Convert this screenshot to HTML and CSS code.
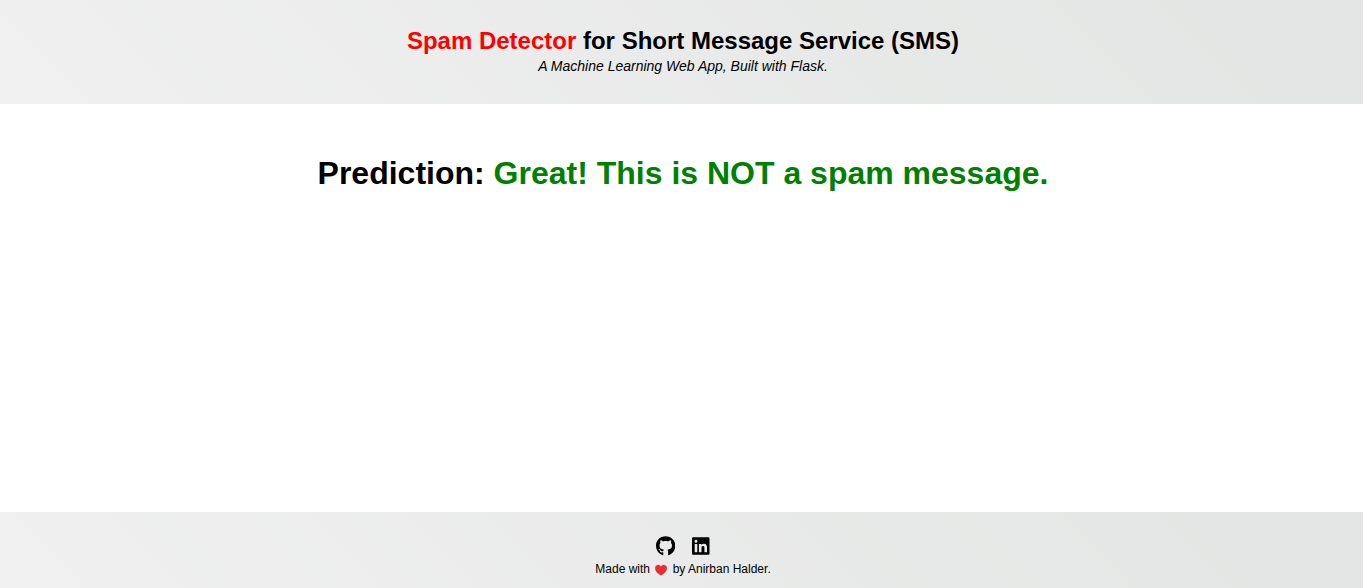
FILE: index.html
```html
<!DOCTYPE html>
<html lang="en">
<head>
<meta charset="utf-8">
<title>Spam Detector</title>
<link rel="stylesheet" href="styles.css">
</head>
<body>
<header class="header">
  <h1 class="title"><span class="accent">Spam Detector</span> for Short Message Service (SMS)</h1>
  <p class="subtitle">A Machine Learning Web App, Built with Flask.</p>
</header>
<main class="results">
  <h2 class="prediction">Prediction: <span class="safe">Great! This is NOT a spam message.</span></h2>
</main>
<footer class="footer">
  <nav class="social">
    <a class="social-link" href="#" aria-label="GitHub"><svg class="icon" viewBox="0 0 496 512" aria-hidden="true"><path d="M244.800 8C106.100 8 0 113.300 0 252c0 110.900 69.800 205.800 169.500 239.200 12.800 2.300 17.300-5.600 17.300-12.100 0-6.200-.3-40.400-.3-61.400 0 0-70 15-84.700-29.800 0 0-11.400-29.100-27.800-36.600 0 0-22.900-15.700 1.600-15.400 0 0 24.900 2 38.600 25.800 21.900 38.600 58.600 27.500 72.900 20.900 2.300-16 8.800-27.100 16-33.700-55.900-6.200-112.300-14.300-112.300-110.500 0-27.500 7.600-41.300 23.600-58.900-2.600-6.500-11.100-33.300 2.600-67.900 20.900-6.500 69 27 69 27 20-5.600 41.500-8.500 62.800-8.500s42.800 2.900 62.800 8.500c0 0 48.100-33.600 69-27 13.700 34.700 5.200 61.400 2.600 67.900 16 17.700 25.800 31.500 25.800 58.900 0 96.500-58.900 104.200-114.800 110.500 9.200 7.900 17 22.900 17 46.400 0 33.700-.3 75.400-.3 83.600 0 6.500 4.600 14.400 17.300 12.100C428.200 457.800 496 362.900 496 252 496 113.300 383.500 8 244.800 8z"/></svg></a>
    <a class="social-link" href="#" aria-label="LinkedIn"><svg class="icon" viewBox="0 0 448 512" aria-hidden="true"><path d="M416 32H31.900C14.300 32 0 46.500 0 64.300v383.400C0 465.500 14.300 480 31.900 480H416c17.600 0 32-14.500 32-32.300V64.300c0-17.800-14.400-32.300-32-32.300zM135.400 416H69V202.200h66.500V416zm-33.200-243c-21.300 0-38.500-17.300-38.500-38.500S80.900 96 102.200 96c21.200 0 38.500 17.300 38.500 38.500 0 21.300-17.200 38.500-38.500 38.500zm282.100 243h-66.400V312c0-24.800-.5-56.700-34.500-56.700-34.600 0-39.900 27-39.900 54.900V416h-66.400V202.200h63.700v29.200h.9c8.900-16.800 30.600-34.500 62.900-34.500 67.200 0 79.700 44.300 79.700 101.900V416z"/></svg></a>
  </nav>
  <p class="credit">Made with
    <svg class="heart" viewBox="0 0 14 12" role="img" aria-label="love"><path d="M7 11.500C3.500 9.500 1 7 1 4a3.200 3.200 0 0 1 6-1.500A3.200 3.200 0 0 1 13 4C13 7 10.500 9.500 7 11.500z"/></svg>
    by Anirban Halder.</p>
</footer>
</body>
</html>
```
FILE: styles.css
```css
* { box-sizing: border-box; margin: 0; padding: 0; }
body {
  display: flex;
  flex-direction: column;
  min-height: 100vh;
  background: #fff;
  color: #000;
  font-family: "Liberation Sans", Arial, sans-serif;
  text-align: center;
}
.header, .footer { background: linear-gradient(45deg, #f0f0f0, #e2e5e3); }
.header { padding: 27px 13px 26px 16px; }
.title { font-size: 24px; line-height: 28px; }
.accent { color: red; }
.subtitle { font-size: 14px; line-height: 23px; font-style: italic; }
.results { flex: 1; padding: 50px 13px 50px 16px; }
.prediction { font-size: 32px; line-height: 38px; }
.safe { color: green; }
.footer { padding: 24px 13px 8px 16px; }
.social { display: flex; justify-content: center; gap: 17px; }
.social-link { color: inherit; }
.icon { display: block; width: auto; height: 20px; fill: currentColor; }
.credit { padding-top: 2px; font-size: 12px; line-height: 22px; }
.heart { width: 14px; height: 12px; margin: 0 1px; fill: #ee2b33; vertical-align: -3px; }
```
